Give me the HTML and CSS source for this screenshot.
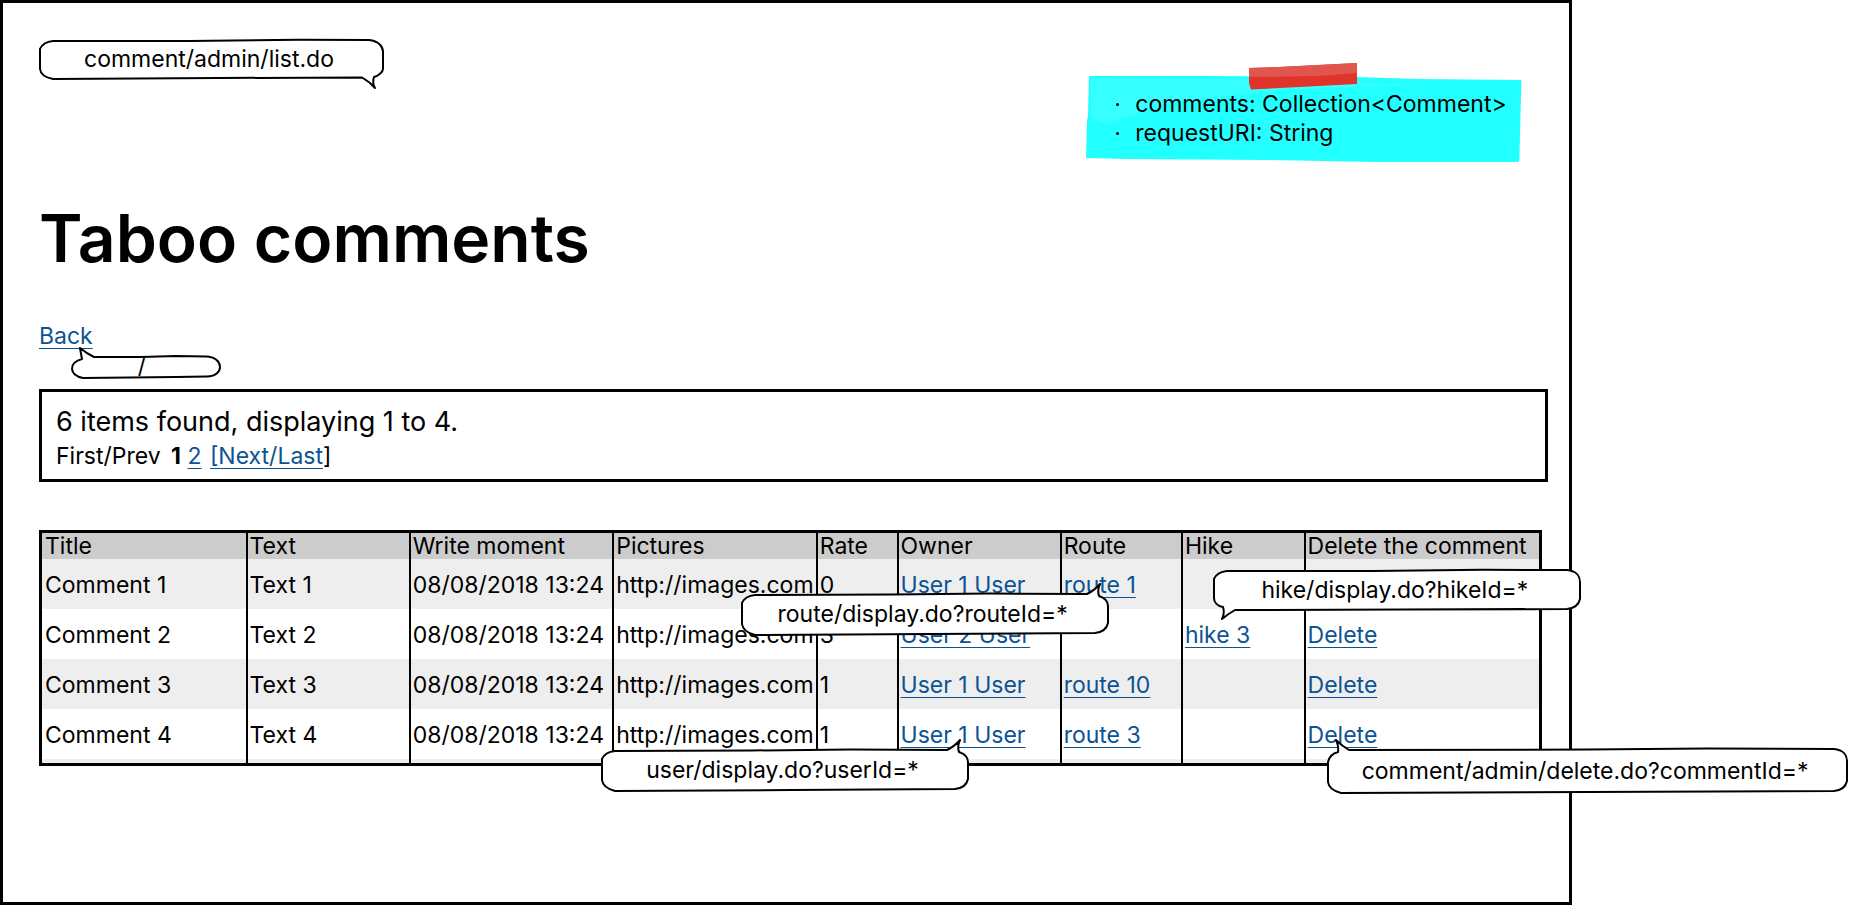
FILE: index.html
```html
<!DOCTYPE html>
<html lang="en">
<head>
<meta charset="utf-8">
<title>Taboo comments</title>
<link rel="stylesheet" href="styles.css">
</head>
<body>
<main class="frame">
  <header class="top">
    <div class="callout callout-page">
      <svg class="shape" width="346" height="54" viewBox="0 0 346 54" aria-hidden="true"><path d="M14 2 L150 2 L260 0.8 L330 1 C340 2 344 8 344 13 V30 C344 33 339 37 335 38 Q333 44 336 49 Q331 43 323 38.5 L180 39 L14 40 Q2 38 1 30 V10 Q4 3 14 2Z"/></svg>
      <span>comment/admin/list.do</span>
    </div>
    <aside class="note">
      <svg class="note-paper" viewBox="0 0 434 86" preserveAspectRatio="none" aria-hidden="true">
        <path fill="#22ffff" d="M3 0 L120 0 L270 1 L330 3 L434 4 L433 45 L432 84 L431 86 L290 86 L180 84 L40 83 L0 82 L1 45 L2 40Z"/>
        <path fill="#36ffff" d="M5 2 L200 4 L330 9 L200 14 L90 25 L20 48 L5 42Z"/>
      </svg>
      <svg class="tape" width="108" height="27" viewBox="0 0 108 27" aria-hidden="true">
        <path fill="#e0342b" d="M0 5 L30 4 L108 0 V21 L50 24 L2 26.500 L0 20Z"/>
        <path fill="#e0564e" d="M0 5 L30 4 L108 0 V10 L70 13 L0 14Z"/>
      </svg>
      <ul class="note-list">
        <li>comments: Collection&lt;Comment&gt;</li>
        <li>requestURI: String</li>
      </ul>
    </aside>
  </header>

  <h1 class="title">Taboo comments</h1>

  <div class="back">
    <a href="#">Back</a>
    <div class="callout callout-back">
      <svg class="shape" width="152" height="24" viewBox="0 0 152 24" aria-hidden="true"><path d="M11 3 Q10 -2 9 -8 Q15 -3 23 1 L70 1 L105 0 L135 0.5 C153 1 154 20 136 20.500 L105 21 L12 22 C-2 19 -3 7 11 3Z"/></svg>
      <span>/</span>
    </div>
  </div>

  <section class="pager">
    <p class="found">6 items found, displaying 1 to 4.</p>
    <nav class="pages">First/Prev <strong>1</strong> <a href="#">2</a> <a class="next" href="#">[Next/Last</a>]</nav>
  </section>

  <table class="grid">
    <colgroup>
      <col class="c-title"><col class="c-text"><col class="c-moment"><col class="c-pictures"><col class="c-rate"><col class="c-owner"><col class="c-route"><col class="c-hike"><col class="c-delete">
    </colgroup>
    <thead>
      <tr><th>Title</th><th>Text</th><th>Write moment</th><th>Pictures</th><th>Rate</th><th>Owner</th><th>Route</th><th>Hike</th><th>Delete the comment</th></tr>
    </thead>
    <tbody>
      <tr>
        <td>Comment 1</td><td>Text 1</td><td>08/08/2018 13:24</td><td>http://images.com</td><td>0</td>
        <td><a href="#">User 1 User</a></td>
        <td><a href="#">route 1</a>
          <div class="callout callout-route">
            <svg class="shape" width="370" height="44" viewBox="0 0 370 44" aria-hidden="true"><path d="M14 2 L150 1.500 L250 0.5 L346 1 Q354 -3 359 -9 Q356 -3 358 3 C364 5 367 9 367 13 V30 Q365 39 354 40 L190 41 L14 42 Q2 39 1 31 V10 Q4 3 14 2Z"/></svg>
            <span>route/display.do?routeId=*</span>
          </div>
        </td>
        <td>
          <div class="callout callout-hike">
            <svg class="shape" width="370" height="54" viewBox="0 0 370 54" aria-hidden="true"><path d="M14 2 L160 2 L270 0.8 L354 1 C364 2 367 8 367 13 V30 Q365 39 354 40 L190 40.500 L22 41 Q15 45 9 50 Q12 44 10 38 C4 37 1 33 1 29 V10 Q4 3 14 2Z"/></svg>
            <span>hike/display.do?hikeId=*</span>
          </div>
        </td>
        <td></td>
      </tr>
      <tr>
        <td>Comment 2</td><td>Text 2</td><td>08/08/2018 13:24</td><td>http://images.com</td><td>3</td>
        <td><a href="#">User 2 User</a></td><td></td><td><a href="#">hike 3</a></td><td><a href="#">Delete</a></td>
      </tr>
      <tr>
        <td>Comment 3</td><td>Text 3</td><td>08/08/2018 13:24</td><td>http://images.com</td><td>1</td>
        <td><a href="#">User 1 User</a></td><td><a href="#">route 10</a></td><td></td><td><a href="#">Delete</a></td>
      </tr>
      <tr>
        <td>Comment 4</td><td>Text 4</td><td>08/08/2018 13:24</td><td>http://images.com</td><td>1</td>
        <td><a href="#">User 1 User</a>
          <div class="callout callout-user">
            <svg class="shape" width="370" height="44" viewBox="0 0 370 44" aria-hidden="true"><path d="M14 2 L150 1.500 L250 0.5 L346 1 Q354 -3 359 -9 Q356 -3 358 3 C364 5 367 9 367 13 V30 Q365 39 354 40 L190 41 L14 42 Q2 39 1 31 V10 Q4 3 14 2Z"/></svg>
            <span>user/display.do?userId=*</span>
          </div>
        </td>
        <td><a href="#">route 3</a></td><td></td>
        <td><a href="#">Delete</a>
          <div class="callout callout-delete">
            <svg class="shape" width="522" height="46" viewBox="0 0 522 46" aria-hidden="true"><path d="M11 4 Q12 -2 9 -8 Q15 -2 22 2 L260 1.500 L380 0.5 L507 1 C517 2 520 8 520 13 V33 Q518 42 507 43 L260 44 L14 45 Q2 42 1 34 V14 Q3 6 11 4Z"/></svg>
            <span>comment/admin/delete.do?commentId=*</span>
          </div>
        </td>
      </tr>
      <tr class="rest"><td></td><td></td><td></td><td></td><td></td><td></td><td></td><td></td><td></td></tr>
    </tbody>
  </table>
</main>
</body>
</html>
```
FILE: styles.css
```css
* {
  box-sizing: border-box;
}

body {
  margin: 0;
  background: #fff;
  color: #000;
  font: 23px/28px Inter, "Open Sans", sans-serif;
}

a {
  color: #0b5394;
  text-decoration: underline;
  text-decoration-thickness: 1px;
  text-underline-offset: 4px;
  text-decoration-skip-ink: none;
}

.frame {
  width: 85%;
  min-height: 100vh;
  padding: 36px 21px 36px 36px;
  border: 3px solid #000;
}

.top {
  display: flex;
  justify-content: space-between;
  align-items: flex-start;
}

/* Speech-bubble annotations */
.callout {
  position: relative;
  z-index: 1;
  display: flex;
  align-items: center;
  justify-content: center;
  height: 40px;
  padding-right: 4px;
  white-space: nowrap;
}

.callout span {
  position: relative;
}

.shape {
  position: absolute;
  left: 0;
  top: 0;
  overflow: visible;
  fill: #fff;
  stroke: #000;
  stroke-width: 2;
  stroke-linejoin: round;
}

.callout-page {
  width: 344px;
}

.callout-back,
.callout-route,
.callout-hike,
.callout-user,
.callout-delete {
  position: absolute;
  width: 368px;
}

.callout-back {
  left: 32px;
  top: 34px;
  width: 150px;
  height: 20px;
  padding-right: 8px;
}

.callout-route {
  left: -321px;
  top: 34px;
  height: 42px;
}

.callout-hike {
  left: 30px;
  top: 10px;
  height: 42px;
}

.callout-user {
  left: -298px;
  top: 40px;
  height: 42px;
}

.callout-delete {
  left: 21px;
  top: 39px;
  width: 521px;
  height: 46px;
}

/* Taped sticky note */
.note {
  position: relative;
  margin: 37px 26px 0 0;
  padding: 14px 15px 14px 30px;
}

.note-paper {
  position: absolute;
  left: 0;
  top: 0;
  width: 100%;
  height: 100%;
}

.tape {
  position: absolute;
  left: 163px;
  top: -13px;
}

.note-list {
  position: relative;
  margin: 0;
  padding: 0;
  list-style: none;
  line-height: 29px;
}

.note-list li {
  display: flex;
  align-items: center;
  gap: 16px;
}

.note-list li::before {
  content: "";
  width: 3px;
  height: 3px;
  border-radius: 50%;
  background: #000;
}

.title {
  margin: 36px 0 44px;
  font-size: 66px;
  font-weight: 600;
  line-height: 80px;
}

.back {
  position: relative;
}

.pager {
  margin-top: 39px;
  padding: 13px 14px 6px;
  border: 3px solid #000;
  line-height: 34px;
}

.found {
  margin: 0;
  font-size: 27px;
}

.pages strong {
  margin-left: 4px;
}

.next {
  margin-left: 2px;
}

.grid {
  width: calc(100% - 6px);
  margin-top: 48px;
  border: 3px solid #000;
  border-spacing: 0;
  table-layout: fixed;
}

.c-title, .c-moment, .c-pictures { width: 13.6%; }
.c-text, .c-owner { width: 10.9%; }
.c-rate { width: 5.4%; }
.c-route { width: 8.1%; }
.c-hike { width: 8.2%; }
.c-delete { width: 15.7%; }

.grid th,
.grid td {
  position: relative;
  height: 50px;
  padding: 2px 0 0 2px;
  border-left: 2px solid #000;
  text-align: left;
  font-weight: 400;
  line-height: 26px;
  white-space: nowrap;
}

.grid th:first-child,
.grid td:first-child {
  padding-left: 3px;
  border-left: 0;
}

.grid th {
  height: 26px;
  padding-top: 0;
  background: #ccc;
}

.grid tbody tr:nth-child(odd) {
  background: #eee;
}

.grid .rest td {
  height: 4px;
}
```
